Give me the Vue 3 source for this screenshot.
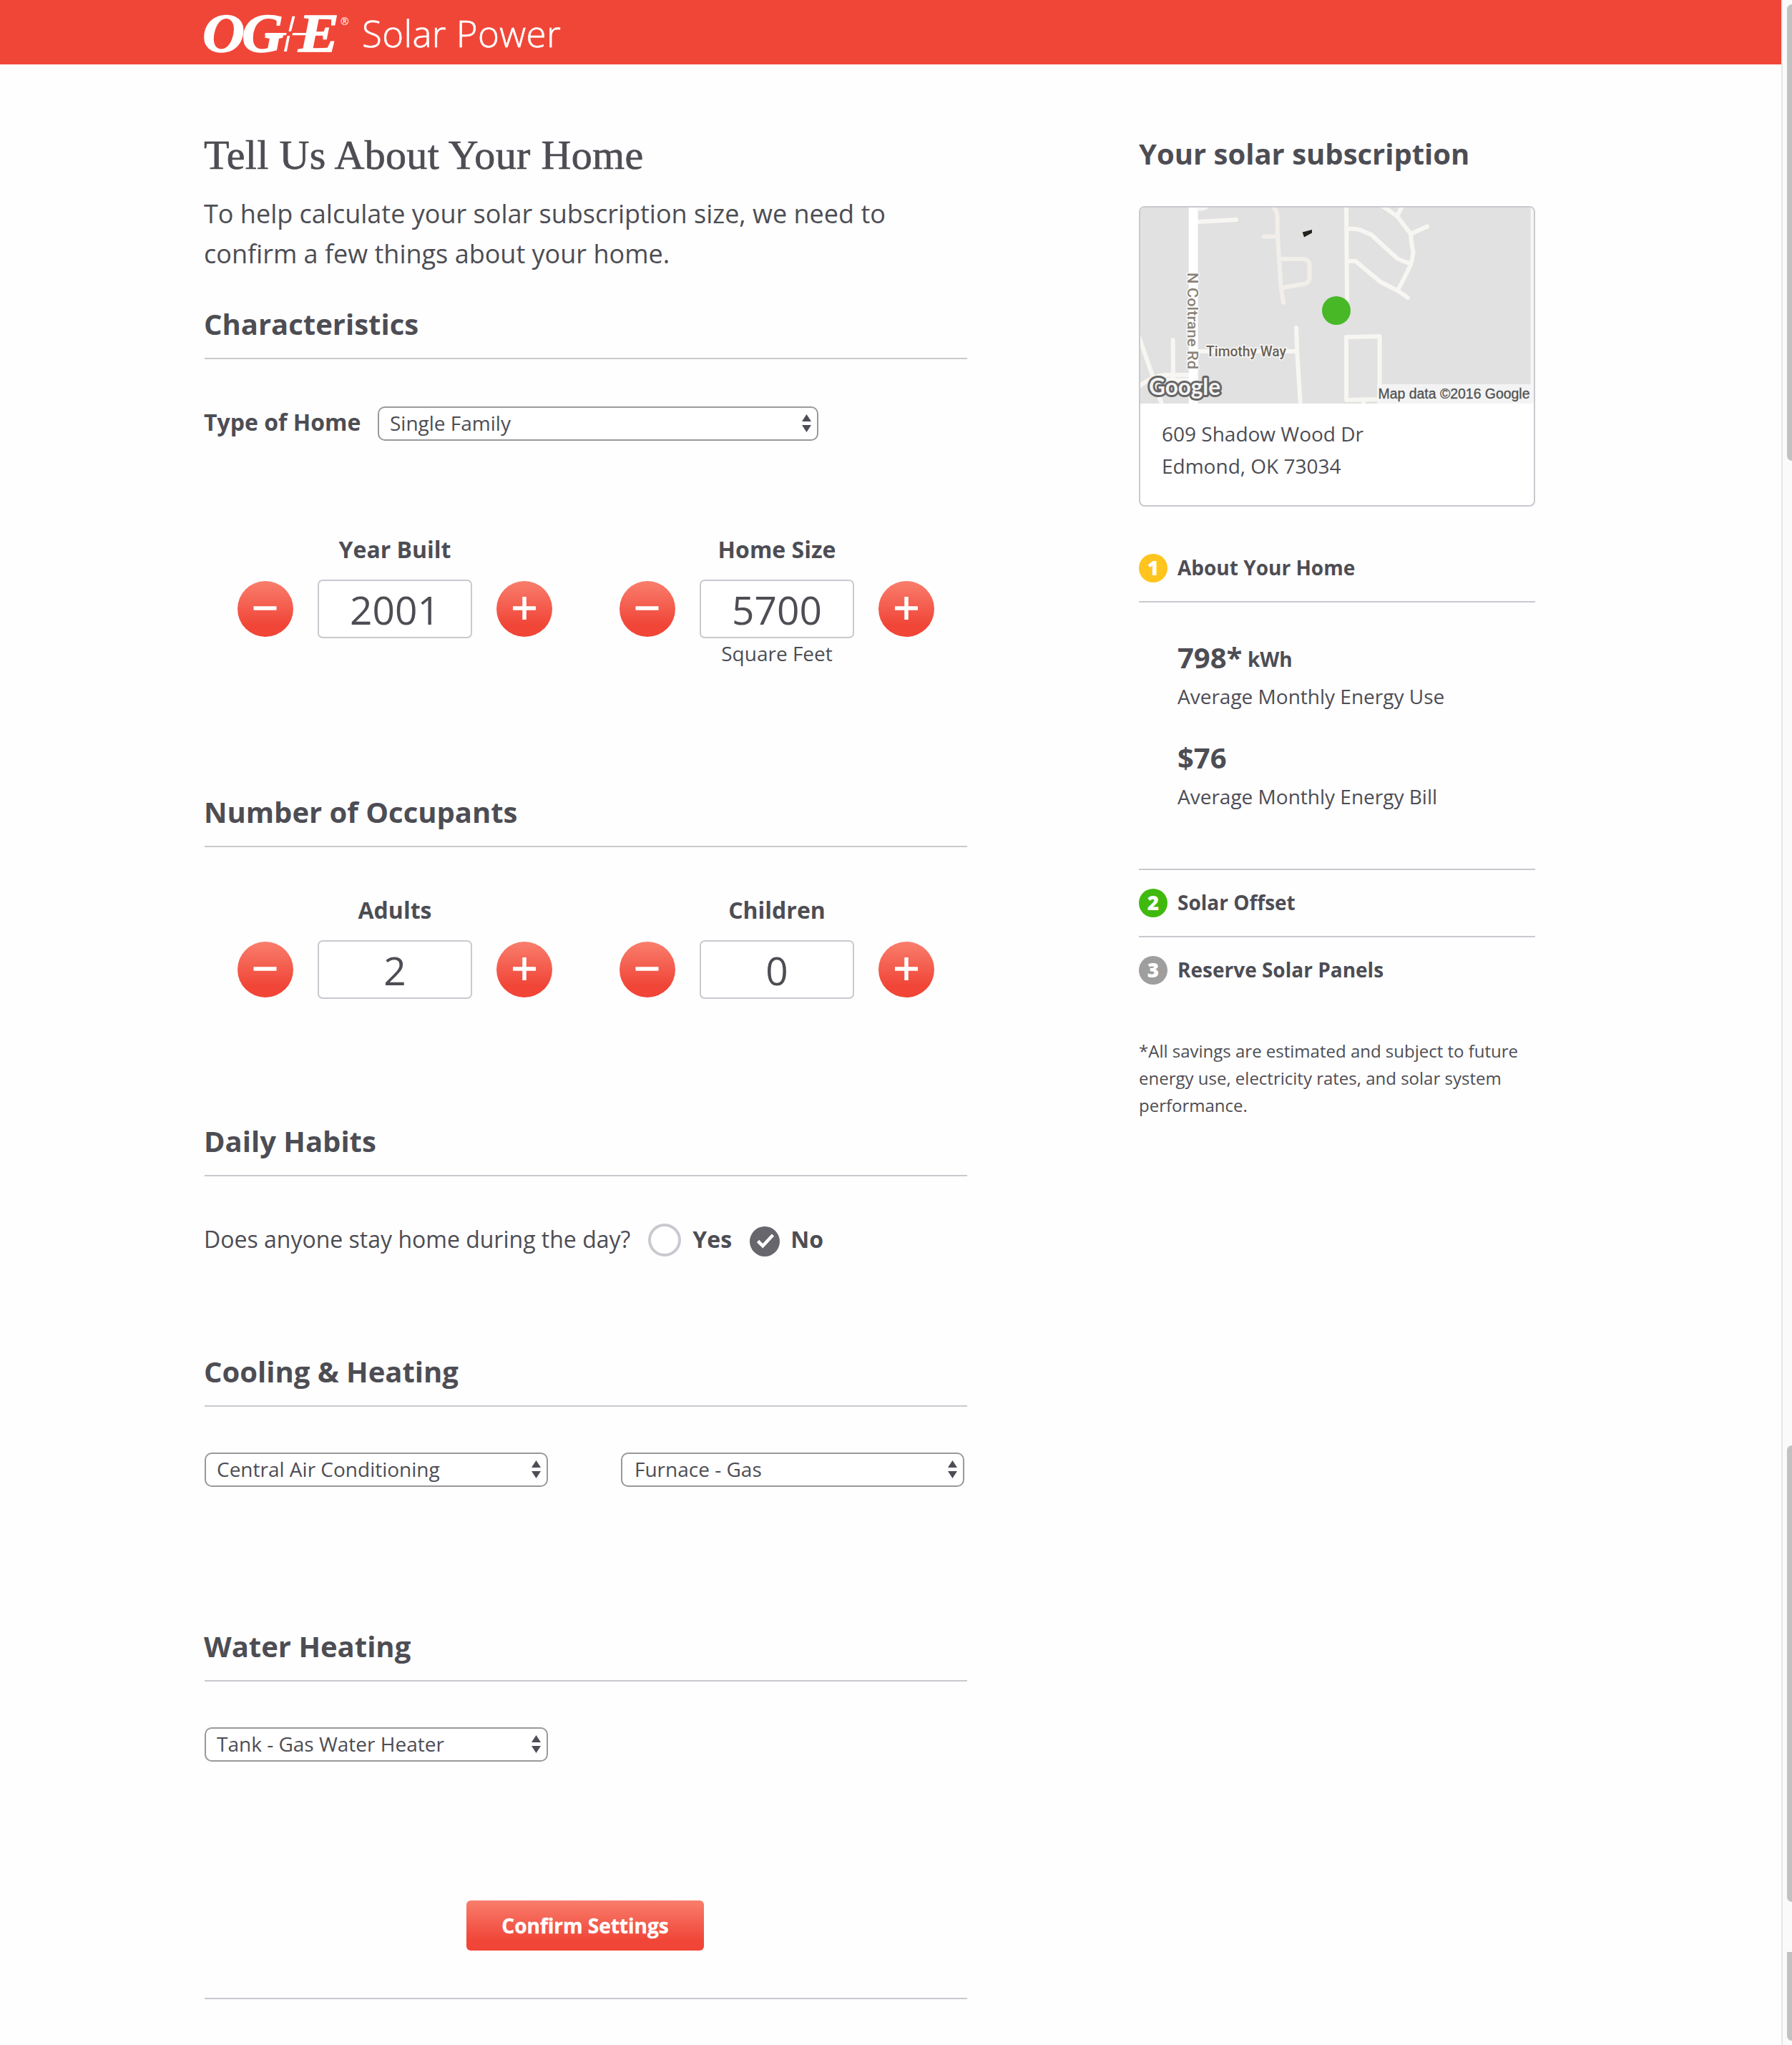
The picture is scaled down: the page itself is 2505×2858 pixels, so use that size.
<script setup>
import { ref } from 'vue'

const groups = ref([
  {
    title: 'Characteristics',
    kind: 'characteristics',
    homeType: 'Single Family',
    steppers: [
      { label: 'Year Built', value: 2001 },
      { label: 'Home Size', value: 5700, note: 'Square Feet' },
    ],
  },
  {
    title: 'Number of Occupants',
    kind: 'occupants',
    steppers: [
      { label: 'Adults', value: 2 },
      { label: 'Children', value: 0 },
    ],
  },
  {
    title: 'Daily Habits',
    kind: 'habits',
    question: 'Does anyone stay home during the day?',
  },
  {
    title: 'Cooling & Heating',
    kind: 'cooling',
    selects: ['Central Air Conditioning', 'Furnace - Gas'],
  },
  {
    title: 'Water Heating',
    kind: 'water',
    selects: ['Tank - Gas Water Heater'],
  },
])

const stats = [
  { value: '798*', unit: 'kWh', label: 'Average Monthly Energy Use' },
  { value: '$76', unit: '', label: 'Average Monthly Energy Bill' },
]
</script>

<template>
  <div class="page">
    <div class="content">
      <header class="header">
        <svg class="logo" width="210" height="90" viewBox="280 0 210 90" fill="#fff">
          <g font-family="'Liberation Serif', serif" font-weight="700" font-style="italic" font-size="76" stroke="#fff" stroke-width="1.4">
            <text x="283" y="71.6" textLength="59" lengthAdjust="spacingAndGlyphs">O</text>
            <text x="338" y="71.6" textLength="58" lengthAdjust="spacingAndGlyphs">G</text>
            <text x="417" y="71.6" textLength="57" lengthAdjust="spacingAndGlyphs">E</text>
          </g>
          <path d="M408.5 22.7H412.5L407 43.7H403.4ZM401.6 50H405.2L400.9 72H396.9ZM371 46H400.8L399.8 49.2H370ZM409.4 46H448V49.2H408.2Z" />
          <text x="476" y="35" font-family="'Open Sans', sans-serif" font-size="14">®</text>
        </svg>
        <span class="brand">Solar Power</span>
      </header>

      <div class="columns">
        <main class="form">
          <h1>Tell Us About Your Home</h1>
          <p class="intro">To help calculate your solar subscription size, we need to<br />confirm a few things about your home.</p>

          <section v-for="g in groups" :key="g.title" class="group" :class="g.kind">
            <h2>{{ g.title }}</h2>

            <div v-if="g.homeType" class="home-type">
              <span class="label">Type of Home</span>
              <div class="select wide">
                <span>{{ g.homeType }}</span>
                <svg width="13" height="25" viewBox="0 0 13 25" fill="#4d4d54"><path d="M6.5 0L13 10H0ZM6.5 25L13 15H0Z" /></svg>
              </div>
            </div>

            <div v-if="g.steppers" class="steppers">
              <div v-for="s in g.steppers" :key="s.label" class="stepper">
                <div class="label">{{ s.label }}</div>
                <div class="controls">
                  <button class="round" @click="s.value--">
                    <svg width="78" height="78" viewBox="0 0 78 78"><path d="M22.500 38H54.500" stroke="#fff" stroke-width="5.500" /></svg>
                  </button>
                  <div class="value">{{ s.value }}</div>
                  <button class="round" @click="s.value++">
                    <svg width="78" height="78" viewBox="0 0 78 78"><path d="M23 38H55M39 22V54" stroke="#fff" stroke-width="5.500" /></svg>
                  </button>
                </div>
                <div v-if="s.note" class="note">{{ s.note }}</div>
              </div>
            </div>

            <div v-if="g.question" class="question">
              <span class="ask">{{ g.question }}</span>
              <i class="radio"></i>
              <b>Yes</b>
              <svg class="check" width="42" height="42" viewBox="0 0 42 42">
                <circle cx="21" cy="21" r="21" fill="#66666c" />
                <path d="M11.5 20.5L18.3 27.3L32.5 12" fill="none" stroke="#fff" stroke-width="4.6" />
              </svg>
              <b>No</b>
            </div>

            <div v-if="g.selects" class="selects">
              <div v-for="s in g.selects" :key="s" class="select">
                <span>{{ s }}</span>
                <svg width="13" height="25" viewBox="0 0 13 25" fill="#4d4d54"><path d="M6.5 0L13 10H0ZM6.5 25L13 15H0Z" /></svg>
              </div>
            </div>
          </section>

          <div class="submit">
            <button class="confirm">Confirm Settings</button>
          </div>
        </main>

        <aside class="sidebar">
          <h3>Your solar subscription</h3>
          <div class="card">
            <svg class="map" width="550" height="274" viewBox="0 0 550 274">
              <rect width="550" height="274" fill="#e1e1e1" />
              <g fill="none" stroke="#f7f6f2" stroke-width="6" stroke-linecap="round" stroke-linejoin="round">
                <path d="M81 20L134 17" />
                <path d="M81 0H96Q90 5 81 5Z" fill="#f7f6f2" stroke="none" />
                <g stroke="#f2efeb">
                  <path d="M186 -1Q191 4 191.500 12L192 41L194 72L196.500 110L200 133" />
                  <path d="M173 40.500H190" />
                  <path d="M196 72H226Q236 72 236.500 80V98Q236.500 105 230 106.500L200 112" />
                </g>
                <path d="M288 -3L289 130" />
                <path d="M291 30Q303 29 309 32L323 38Q341 55 359 71Q366 75 376 78" />
                <path d="M337 -3L359 12L378 37Q379 52 381.500 62Q380 76 376 84Q366 105 359.500 116" />
                <path d="M359 12L367 -4M380 36L401 26.500" />
                <path d="M291 75H301L335.700 104L359.500 116L374 126" />
                <path d="M81 201H218M218 168L219.500 207L224 278" />
                <path d="M288 181L334.600 180V268L288 269ZM312 270V276" />
                <path d="M-2 180L18 238L30 275M45.600 185L46 240M-2 250Q16 236 34 234H70M34 241H70" />
              </g>
              <rect x="545.500" width="4.500" height="274" fill="#f7f6f2" />
              <rect x="67.800" width="12.800" height="274" fill="#fff" />
              <path d="M226.700 34.500L240 31V35.500L229 41.500Z" fill="#24211c" />
              <rect x="331" y="247" width="219" height="27" fill="#f6f6f6" fill-opacity="0.85" />
              <circle cx="274" cy="144" r="20" fill="#48b827" />
              <g font-family="Roboto, sans-serif" font-size="21" paint-order="stroke" stroke="#fff" stroke-width="3" stroke-opacity="0.75">
                <text transform="translate(66 91) rotate(90)" font-weight="500" fill="#8a8478" textLength="135" lengthAdjust="spacingAndGlyphs">N Coltrane Rd</text>
                <text x="92" y="208" font-weight="500" fill="#6a6255" textLength="112" lengthAdjust="spacingAndGlyphs">Timothy Way</text>
              </g>
              <text x="332.500" y="266.500" fill="#505050" stroke="#505050" stroke-width="0.300" font-family="'Liberation Sans', Arial, sans-serif" font-size="20" textLength="212" lengthAdjust="spacingAndGlyphs">Map data ©2016 Google</text>
              <text x="12" y="262" fill="#f4f4f4" stroke="#666" stroke-width="6" stroke-linejoin="round" paint-order="stroke" font-family="Lato, sans-serif" font-weight="700" font-size="32" textLength="100" lengthAdjust="spacingAndGlyphs">Google</text>
            </svg>
            <div class="address">609 Shadow Wood Dr<br />Edmond, OK 73034</div>
          </div>

          <div class="step first"><i class="badge yellow">1</i><b>About Your Home</b></div>
          <div class="stats">
            <div v-for="s in stats" :key="s.label" class="stat">
              <div class="figure">{{ s.value }}<small v-if="s.unit">{{ s.unit }}</small></div>
              <div class="caption">{{ s.label }}</div>
            </div>
          </div>
          <div class="step"><i class="badge green">2</i><b>Solar Offset</b></div>
          <div class="step last"><i class="badge gray">3</i><b>Reserve Solar Panels</b></div>
          <p class="footnote">*All savings are estimated and subject to future<br />energy use, electricity rates, and solar system<br />performance.</p>
        </aside>
      </div>
    </div>

    <div class="scrollbar">
      <div class="thumb top"></div>
      <div class="thumb middle"></div>
      <div class="thumb bottom"></div>
    </div>
  </div>
</template>

<style>
body {
  margin: 0;
  background: #fefefe;
}
</style>

<style scoped>
.page {
  display: flex;
  width: 2505px;
  height: 2858px;
  overflow: hidden;
  background: #fefefe;
  color: #4d4d54;
  font-family: 'Open Sans', sans-serif;
}
h1, h2, h3, p { margin: 0; }
i { font-style: normal; }
button {
  border: 0;
  padding: 0;
  font-family: inherit;
  color: #fff;
  background: linear-gradient(#f97e6d, #f04537 80%);
}
svg { display: block; flex: none; }
.content { width: 2490px; }

.header {
  display: flex;
  height: 90px;
  padding-left: 280px;
  background: #f04638;
  color: #fff;
}
.brand {
  margin-left: 16px;
  font-size: 51px;
  font-weight: 300;
  line-height: 93px;
  letter-spacing: 0.4px;
  -webkit-text-stroke: 0.6px #fff;
}

.columns {
  display: flex;
  padding-left: 286px;
}
.form {
  box-sizing: border-box;
  width: 1066px;
  height: 2704px;
  padding-top: 97px;
  border-bottom: 2px solid #c9c9cf;
}
h1 {
  margin-left: -1px;
  font: 400 58px/60px Georgia, 'Liberation Serif', serif;
  letter-spacing: 0.35px;
  -webkit-text-stroke: 0.7px #4d4d54;
}
.intro {
  margin: 24px 0 0 -1px;
  font-size: 36px;
  line-height: 56px;
}
.group { box-sizing: border-box; }
.group.characteristics { margin-top: 44px; height: 682px; }
.group.occupants { height: 460px; }
.group.habits { height: 322px; }
.group.cooling { height: 384px; }
.group.water { height: 381px; }
h2 {
  padding-bottom: 22px;
  border-bottom: 2px solid #c9c9cf;
  font-size: 40px;
  line-height: 51px;
  text-indent: -1px;
}
.label {
  font-size: 32px;
  font-weight: 700;
}
.home-type {
  display: flex;
  margin-top: 66px;
}
.home-type .label {
  width: 242px;
  line-height: 44px;
  text-indent: -1px;
}
.select {
  display: flex;
  justify-content: space-between;
  box-sizing: border-box;
  width: 480px;
  height: 48px;
  padding: 0 8px 0 15px;
  border: 2px solid #999;
  border-radius: 10px;
  background: #fff;
  font-size: 28px;
  line-height: 42px;
}
.select.wide { width: 616px; }
.select svg { margin-top: 9px; }
.selects {
  display: flex;
  gap: 102px;
  padding-top: 64px;
}
.selects .select + .select { padding-left: 17px; }
.steppers { display: flex; }
.characteristics .steppers { margin-top: 132px; }
.occupants .steppers { margin-top: 68px; }
.stepper {
  display: flex;
  flex-direction: column;
  align-items: center;
  width: 440px;
  padding: 0 48px 0 46px;
}
.stepper .label { line-height: 40px; }
.controls {
  display: flex;
  align-items: center;
  justify-content: space-between;
  width: 440px;
  margin-top: 22px;
}
.round {
  width: 78px;
  height: 78px;
  border-radius: 50%;
}
.value {
  box-sizing: border-box;
  width: 216px;
  height: 82px;
  border: 2px solid #c9c9cf;
  border-radius: 7px;
  background: #fff;
  font-size: 55px;
  line-height: 79px;
  text-align: center;
}
.note {
  margin-top: 1px;
  font-size: 28px;
  line-height: 40px;
}
.question {
  display: flex;
  margin-top: 66px;
  font-size: 32px;
  line-height: 44px;
}
.ask { text-indent: -1px; }
.radio {
  box-sizing: border-box;
  width: 46px;
  height: 46px;
  margin: 0 16px 0 25px;
  border: 4px solid #c9c9cf;
  border-radius: 50%;
  background: #fff;
}
.check { margin: 4px 15px 0 25px; }
.submit { font-size: 0; }
.confirm {
  width: 332px;
  height: 70px;
  margin-left: 366px;
  border-radius: 6px;
  font-size: 28px;
  font-weight: 700;
  line-height: 70px;
  -webkit-text-stroke: 0.4px #fff;
}

.sidebar {
  width: 554px;
  margin-left: 240px;
  padding-top: 97px;
}
h3 {
  font-size: 40px;
  line-height: 56px;
}
.card {
  box-sizing: border-box;
  height: 420px;
  margin-top: 45px;
  border: 2px solid #c9c9cf;
  border-radius: 8px;
  overflow: hidden;
  background: #fff;
}
.address {
  padding: 20px 30px 0;
  font-size: 28px;
  line-height: 44.8px;
}
.step {
  display: flex;
  gap: 14px;
  height: 40px;
  padding: 26px 0;
  border-top: 2px solid #c9c9cf;
  font-size: 28px;
  line-height: 39px;
}
.step.first {
  margin-top: 40px;
  border-top: 0;
  border-bottom: 2px solid #c9c9cf;
}
.step.last { padding-bottom: 0; }
.badge {
  width: 40px;
  height: 40px;
  border-radius: 50%;
  color: #fff;
  font-weight: 800;
  text-align: center;
}
.yellow { background: #ffc41e; }
.green { background: #40b90e; }
.gray { background: #9e9e9e; }
.stats {
  box-sizing: border-box;
  height: 372px;
  padding: 48px 0 0 54px;
}
.stat { margin-bottom: 31px; }
.figure {
  height: 57px;
  font-size: 40px;
  font-weight: 700;
  line-height: 57px;
}
.figure small {
  margin-left: 7.5px;
  font-size: 28px;
  line-height: 1;
  vertical-align: 2px;
}
.caption {
  font-size: 28px;
  line-height: 52px;
}
.footnote {
  margin-top: 74px;
  font-size: 24px;
  line-height: 38px;
}

.scrollbar {
  display: flex;
  flex-direction: column;
  box-sizing: border-box;
  width: 15px;
  padding: 6px 0 0 6px;
  border-left: 2px solid #e5e5e5;
  background: #fafafa;
}
.thumb {
  width: 14px;
  flex: none;
  border-radius: 7px;
  background: #c1c1c1;
}
.thumb.top { height: 638px; }
.thumb.middle { margin-top: 1376px; height: 638px; }
.thumb.bottom {
  margin-top: 70px;
  height: 124px;
  border-radius: 0 0 7px 7px;
}
</style>
